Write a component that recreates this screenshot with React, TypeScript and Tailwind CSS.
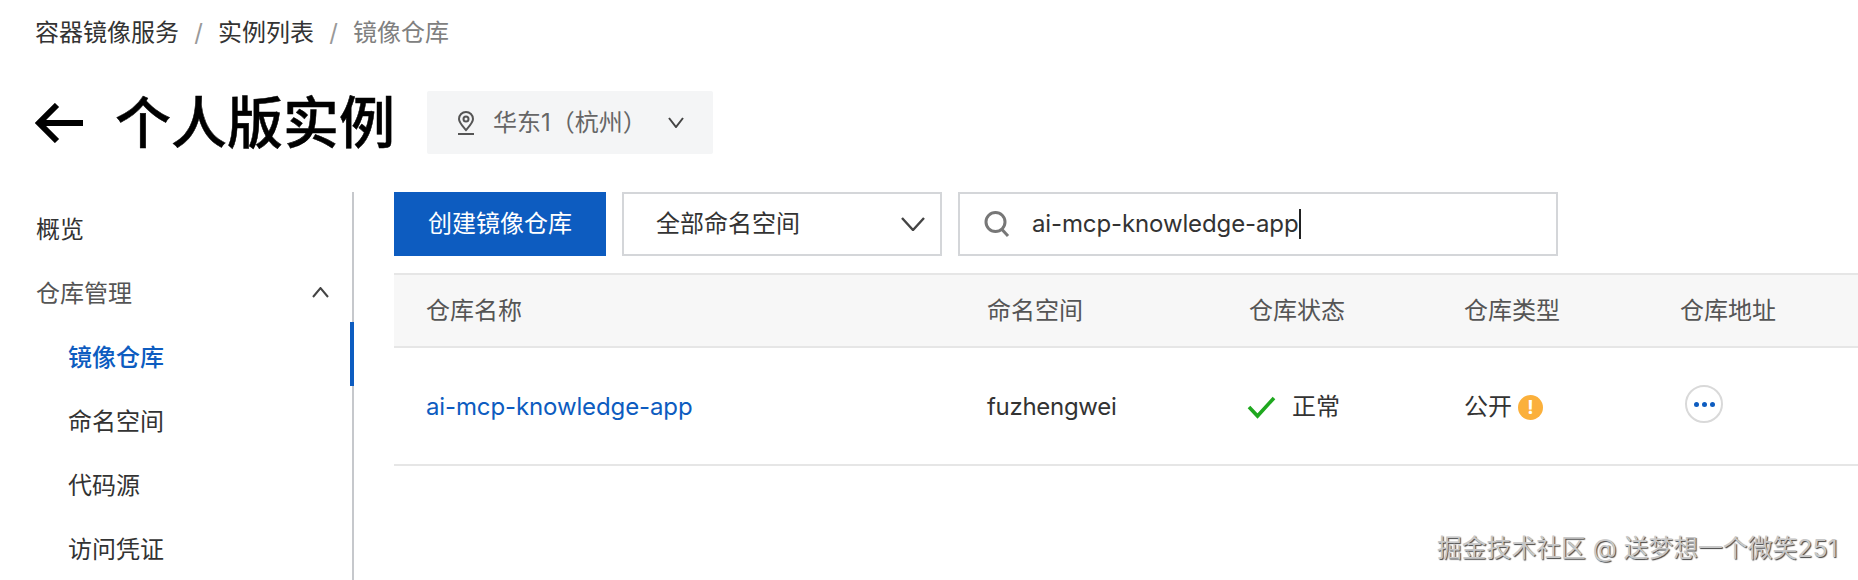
const font = '[font-family:Inter,"Noto_Sans_CJK_SC",sans-serif]';

const subItems = ['镜像仓库', '命名空间', '代码源', '访问凭证'];
const gridCols = 'grid grid-cols-[561px_262px_216px_216px_1fr] items-center';

const Chevron = ({ up = false, w = 16, h = 10, sw = 2 }: { up?: boolean; w?: number; h?: number; sw?: number }) => (
  <svg width={w} height={h} viewBox={`0 0 ${w} ${h}`} fill="none" className="shrink-0">
    <path
      d={up ? `M1 ${h - 1}L${w / 2} 1L${w - 1} ${h - 1}` : `M1 1L${w / 2} ${h - 1}L${w - 1} 1`}
      stroke="#444"
      strokeWidth={sw}
    />
  </svg>
);

export default function App() {
  return (
    <div className={`relative h-[580px] w-full overflow-hidden bg-white text-[24px] text-[#333] ${font}`}>
      {/* 面包屑 */}
      <div className="flex h-[66px] items-center pl-[35px] leading-none">
        <span>容器镜像服务</span>
        <span className="w-[39px] text-center text-[#999]">/</span>
        <span>实例列表</span>
        <span className="w-[39px] text-center text-[#999]">/</span>
        <span className="text-[#808080]">镜像仓库</span>
      </div>

      {/* 标题 */}
      <div className="mt-[25px] flex h-[63px] items-center pl-[35px]">
        <svg width="48" height="40" viewBox="0 0 48 40" fill="none" className="shrink-0">
          <path d="M4 20H48M22 2L4 20L22 38" stroke="#000" strokeWidth="6" />
        </svg>
        <h1 className="ml-[32px] w-[276px] text-[56px] leading-none font-medium whitespace-nowrap text-black [-webkit-text-stroke:0.5px_#000]">个人版实例</h1>
        <button className="ml-[36px] flex h-[63px] w-[286px] items-center rounded-[2px] bg-[#f4f5f6] pl-[30px] text-[#666]">
          <svg width="18" height="24" viewBox="0 0 18 24" fill="none" className="shrink-0">
            <path d="M9 19C5 14.5 2 11.5 2 8a7 7 0 0 1 14 0c0 3.5-3 6.500-7 11Z" stroke="#555" strokeWidth="2" />
            <circle cx="9" cy="8" r="2.500" stroke="#555" strokeWidth="2" />
            <path d="M1 23H17" stroke="#555" strokeWidth="2" />
          </svg>
          <span className="ml-[18px]">华东1（杭州）</span>
          <span className="ml-[21px]">
            <Chevron w={16} h={11} sw={2} />
          </span>
        </button>
      </div>

      <div className="mt-[38px] flex">
        {/* 侧边栏 */}
        <aside className="relative h-[388px] w-[354px] shrink-0 border-r-2 border-[#c6c8cc]">
          <div className="flex h-[76px] items-center pl-[36px]">概览</div>
          <div className="mb-[6px] flex h-[52px] items-center justify-between pr-[23px] pl-[36px] text-[#555]">
            仓库管理
            <span className="-translate-y-[2px]">
              <Chevron up w={17} h={11} sw={2} />
            </span>
          </div>
          {subItems.map((item, i) => (
            <div
              key={item}
              className={`relative flex h-[64px] items-center pl-[68px] ${i === 0 ? 'font-medium text-[#0d5cc0]' : ''}`}
            >
              {item}
              {i === 0 && <span className="absolute top-[-4px] right-[-2px] h-full w-[4px] bg-[#0d5cc0]" />}
            </div>
          ))}
        </aside>

        <main className="min-w-0 flex-1 pl-[40px]">
          {/* 工具栏 */}
          <div className="flex h-[64px] items-stretch">
            <button className="w-[212px] bg-[#0d5cc0] text-white">创建镜像仓库</button>
            <div className="ml-[16px] flex w-[320px] items-center justify-between border-2 border-[#d4d6d9] pr-[15px] pl-[32px]">
              全部命名空间
              <Chevron w={24} h={14} sw={2.4} />
            </div>
            <div className="ml-[16px] flex w-[600px] items-center border-2 border-[#d4d6d9] pl-[24px]">
              <svg width="26" height="28" viewBox="0 0 26 28" fill="none" className="shrink-0">
                <circle cx="11.500" cy="12" r="9.500" stroke="#777" strokeWidth="3" />
                <path d="M18 19.500L24 26" stroke="#777" strokeWidth="3" />
              </svg>
              <span className="ml-[22px] border-r-2 border-[#222] pr-px leading-[30px] tracking-[-0.12px]">ai-mcp-knowledge-app</span>
            </div>
          </div>

          {/* 表格 */}
          <div className="mt-[17px]">
            <div className={`${gridCols} h-[75px] border-y-2 border-[#e6e6e6] bg-[#f7f7f7] text-[#555]`}>
              <div className="pl-[32px]">仓库名称</div>
              <div className="pl-[32px]">命名空间</div>
              <div className="pl-[32px]">仓库状态</div>
              <div className="pl-[31px]">仓库类型</div>
              <div className="pl-[31px]">仓库地址</div>
            </div>
            <div className={`${gridCols} h-[118px] border-b-2 border-[#e6e6e6] pt-[2px]`}>
              <div className="pl-[32px] tracking-[-0.12px] text-[#0d5cc0]">ai-mcp-knowledge-app</div>
              <div className="pl-[32px] tracking-[-0.3px]">fuzhengwei</div>
              <div className="flex items-center pl-[30px]">
                <svg width="29" height="24" viewBox="0 0 29 24" fill="none">
                  <path d="M2 12l8.500 9L27 3" stroke="#1fa81f" strokeWidth="3.6" />
                </svg>
                <span className="ml-[16px]">正常</span>
              </div>
              <div className="flex items-center pl-[31px]">
                公开
                <span className="ml-[6px] flex h-[25px] w-[25px] items-center justify-center rounded-full bg-[#fbb03b] text-[19px] leading-none font-bold text-white">!</span>
              </div>
              <div className="pl-[36px]">
                <span className="flex h-[38px] w-[38px] -translate-y-[3px] items-center justify-center gap-[3px] rounded-full border-2 border-[#d9d9d9]">
                  <i className="h-[5px] w-[5px] rounded-full bg-[#0d5cc0]" />
                  <i className="h-[5px] w-[5px] rounded-full bg-[#0d5cc0]" />
                  <i className="h-[5px] w-[5px] rounded-full bg-[#0d5cc0]" />
                </span>
              </div>
            </div>
          </div>
        </main>
      </div>

      {/* 水印 */}
      <div className="absolute top-[531px] left-[1437px] text-[24.8px] leading-[34px] whitespace-nowrap text-[#c8c8c8] [text-shadow:1px_1px_1px_#444]">
        掘金技术社区 @ 送梦想一个微笑251
      </div>
    </div>
  );
}
